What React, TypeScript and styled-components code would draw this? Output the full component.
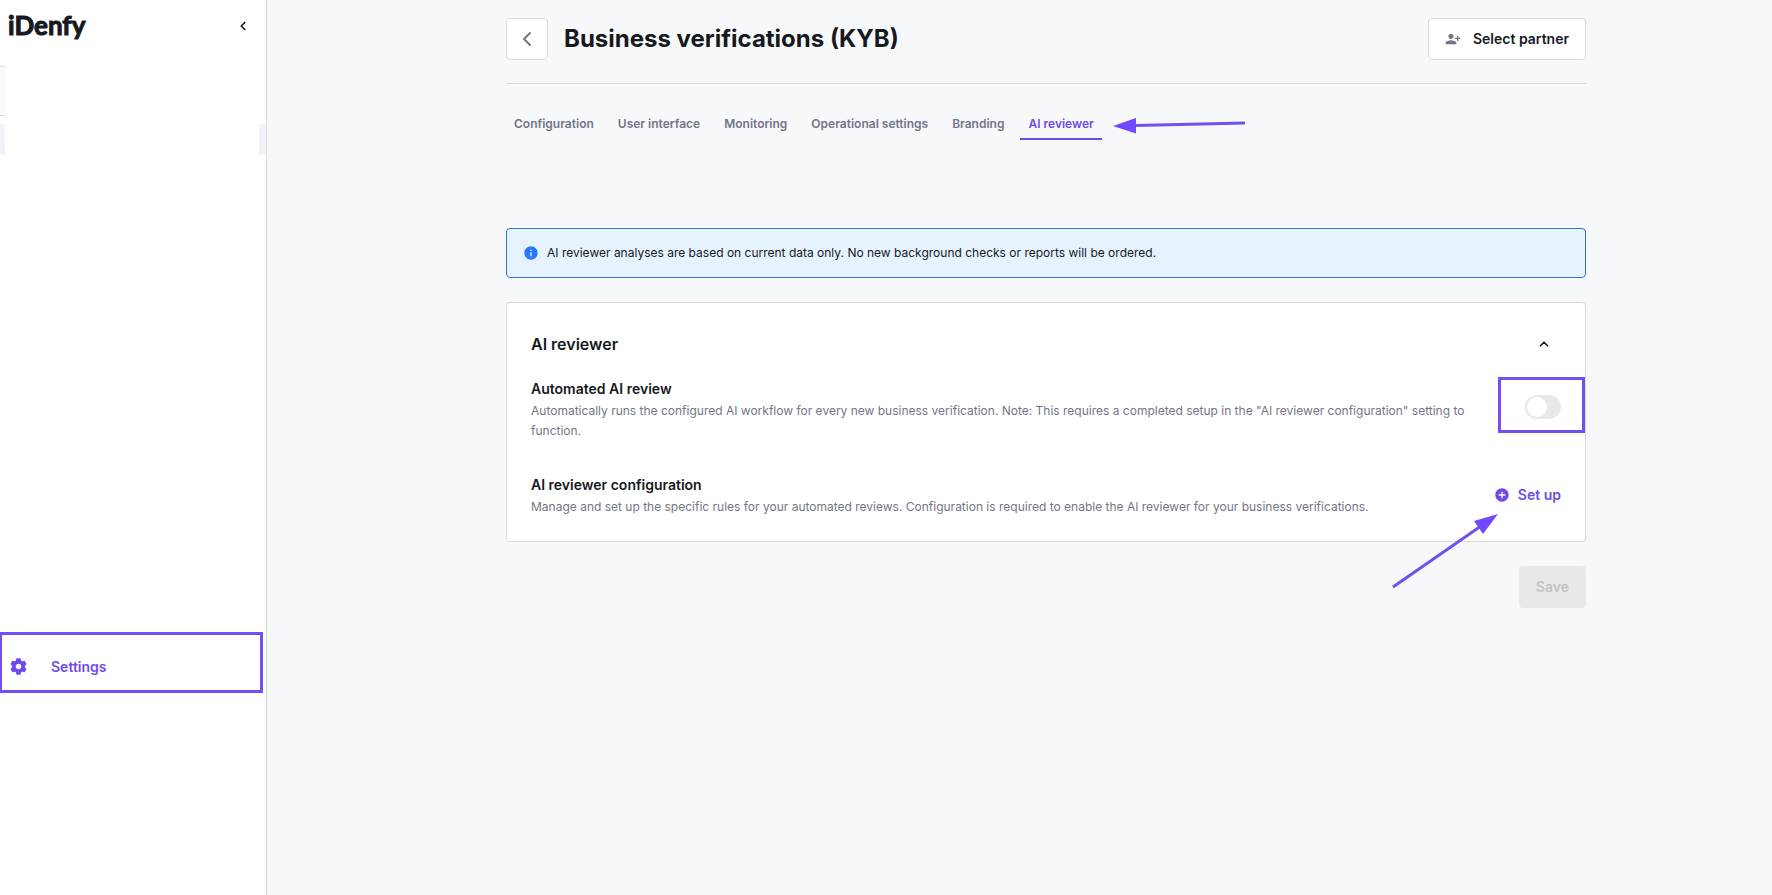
import React, { useState } from "react";
import styled, { createGlobalStyle } from "styled-components";
import { ChevronLeft, ChevronUp } from "lucide-react";
import { MdAddCircle, MdInfo, MdPersonAddAlt1 } from "react-icons/md";

const color = {
  ink: "#16191d",
  muted: "#737687",
  line: "#d8dae3",
  page: "#f7f8fa",
  purple: "#6f4aea",
  marker: "#7250f0",
};

const GlobalStyle = createGlobalStyle`
  * { box-sizing: border-box; }
  body {
    margin: 0;
    background: ${color.page};
    color: ${color.ink};
    font-family: Inter, "Liberation Sans", sans-serif;
    font-size: 12px;
    line-height: 20px;
  }
  button { font: inherit; color: inherit; cursor: pointer; }
  h1, h2, h3, p { margin: 0; }
`;

const Shell = styled.div`
  display: flex;
  min-height: 100vh;
`;

const Sidebar = styled.aside`
  flex: 0 0 267px;
  background: #fff;
  border-right: 1px solid ${color.line};
`;

const SidebarHead = styled.div`
  display: flex;
  justify-content: space-between;
  height: 66px;
  padding: 8px 16px 0 8px;
`;

const Logo = styled.a`
  color: ${color.ink};
  font: 700 26px/34px Lato, sans-serif;
  text-decoration: none;
  -webkit-text-stroke: 1px ${color.ink};
  stroke-linejoin: round;
`;

const IconButton = styled.button`
  display: grid;
  place-items: center;
  width: 14px;
  height: 36px;
  padding: 0;
  border: 0;
  background: none;
`;

const SearchEdge = styled.div`
  width: 5px;
  height: 50px;
  margin-bottom: 8px;
  background: #fafafc;
  border: solid ${color.line};
  border-width: 1px 0;
`;

const NavEdges = styled.div`
  display: flex;
  justify-content: space-between;
  height: 31px;
`;

const NavEdge = styled.span<{ $width: number }>`
  width: ${(p) => p.$width}px;
  background: #f3f2f9;
`;

const Nav = styled.nav`
  margin-top: 477px;
  padding-right: 3px;
`;

const NavLink = styled.a`
  display: flex;
  align-items: center;
  gap: 24px;
  height: 61px;
  padding: 8px 8px 0;
  border: 3px solid ${color.marker};
  border-left-width: 2px;
  color: ${color.purple};
  font-size: 14px;
  font-weight: 600;
  text-decoration: none;
`;

const Main = styled.main`
  flex: 1;
  min-width: 0;
  padding: 18px 0 24px 53px;
`;

const Content = styled.div`
  max-width: 1080px;
  margin: 0 auto;
`;

const Header = styled.header`
  display: flex;
  align-items: center;
  gap: 16px;
  padding-bottom: 23px;
  border-bottom: 1px solid ${color.line};
`;

const BackButton = styled.button`
  display: grid;
  place-items: center;
  width: 42px;
  height: 42px;
  padding: 0;
  background: #fff;
  border: 1px solid ${color.line};
  border-radius: 4px;
  color: ${color.muted};
`;

const PageTitle = styled.h1`
  flex: 1;
  font-size: 24px;
  line-height: 32px;
  font-weight: 700;
`;

const PartnerButton = styled.button`
  display: flex;
  align-items: center;
  gap: 12px;
  height: 42px;
  padding: 0 16px;
  background: #fff;
  border: 1px solid ${color.line};
  border-radius: 4px;
  font-size: 14px;
  font-weight: 600;
  svg { color: ${color.muted}; }
`;

const Tabs = styled.nav`
  display: flex;
  gap: 8px;
  margin: 24px 0 88px;
`;

const Tab = styled.a<{ $active?: boolean }>`
  position: relative;
  padding: 6px 8px 4px;
  border-bottom: 2px solid ${(p) => (p.$active ? color.purple : "transparent")};
  color: ${(p) => (p.$active ? color.purple : color.muted)};
  font-weight: 600;
  text-decoration: none;
`;

const TabArrow = styled.svg`
  position: absolute;
  left: 100%;
  top: 8px;
  margin-left: 11px;
  pointer-events: none;
`;

const Notice = styled.div`
  display: flex;
  align-items: center;
  gap: 8px;
  height: 50px;
  padding: 0 16px;
  margin-bottom: 24px;
  background: #e7f2ff;
  border: 1px solid #2f78d0;
  border-radius: 4px;
  svg { color: #2979ff; }
`;

const Card = styled.section`
  padding: 24px;
  background: #fff;
  border: 1px solid ${color.line};
  border-radius: 4px;
`;

const CardHead = styled.div`
  display: flex;
  align-items: center;
  justify-content: space-between;
  height: 34px;
  padding-right: 10px;
  margin-bottom: 18px;
`;

const CardTitle = styled.h2`
  font-size: 16px;
  font-weight: 600;
`;

const Setting = styled.div`
  display: flex;
  align-items: center;
  justify-content: space-between;
  gap: 48px;
  & + & { margin-top: 34px; }
`;

const SettingTitle = styled.h3`
  margin-bottom: 2px;
  font-size: 14px;
  font-weight: 600;
`;

const SettingText = styled.p`
  color: ${color.muted};
`;

const SwitchFrame = styled.label`
  position: relative;
  display: flex;
  padding-bottom: 6px;
  &::after {
    content: "";
    position: absolute;
    inset: -18px -24px -8px -27px;
    border: 3px solid ${color.marker};
    pointer-events: none;
  }
`;

const Switch = styled.input`
  appearance: none;
  width: 36px;
  height: 24px;
  margin: 0;
  padding: 2px;
  border-radius: 12px;
  background: #e8e8e8;
  cursor: pointer;
  &::before {
    content: "";
    display: block;
    width: 20px;
    height: 20px;
    border-radius: 50%;
    background: #fff;
  }
  &:checked { background: ${color.purple}; }
  &:checked::before { margin-left: 12px; }
`;

const SetupButton = styled.button`
  position: relative;
  display: flex;
  align-items: center;
  gap: 8px;
  padding: 0 0 2px;
  border: 0;
  background: none;
  color: ${color.purple};
  font-size: 14px;
  font-weight: 600;
  white-space: nowrap;
`;

const SetupArrow = styled.svg`
  position: absolute;
  right: 62px;
  top: 28px;
  pointer-events: none;
`;

const Actions = styled.div`
  display: flex;
  justify-content: flex-end;
  margin-top: 24px;
`;

const SaveButton = styled.button`
  height: 42px;
  padding: 0 17px;
  border: 0;
  border-radius: 4px;
  background: #e9e9e9;
  color: #c1c1c4;
  font-size: 14px;
  font-weight: 600;
`;

function GearIcon() {
  return (
    <svg width="17" height="17" viewBox="-8.500 -8.500 17 17" fill="currentColor" aria-hidden="true">
      <circle r="4.600" fill="none" stroke="currentColor" strokeWidth="3.600" />
      {[0, 60, 120, 180, 240, 300].map((angle) => (
        <rect key={angle} x="-2.400" y="-8.200" width="4.800" height="4" rx="1.200" transform={`rotate(${angle})`} />
      ))}
    </svg>
  );
}

const tabs = ["Configuration", "User interface", "Monitoring", "Operational settings", "Branding", "AI reviewer"];

export default function App() {
  const [automated, setAutomated] = useState(false);
  const [open, setOpen] = useState(true);

  return (
    <>
      <GlobalStyle />
      <Shell>
        <Sidebar>
          <SidebarHead>
            <Logo href="#">iDenfy</Logo>
            <IconButton aria-label="Collapse sidebar">
              <ChevronLeft size={14} strokeWidth={3} />
            </IconButton>
          </SidebarHead>
          <SearchEdge />
          <NavEdges>
            <NavEdge $width={5} />
            <NavEdge $width={7} />
          </NavEdges>
          <Nav>
            <NavLink href="#settings">
              <GearIcon />
              Settings
            </NavLink>
          </Nav>
        </Sidebar>
        <Main>
          <Content>
            <Header>
              <BackButton aria-label="Back">
                <ChevronLeft size={24} strokeWidth={2} />
              </BackButton>
              <PageTitle>Business verifications (KYB)</PageTitle>
              <PartnerButton>
                <MdPersonAddAlt1 size={16} />
                Select partner
              </PartnerButton>
            </Header>
            <Tabs>
              {tabs.map((name) => {
                const active = name === "AI reviewer";
                return (
                  <Tab key={name} href="#" $active={active} aria-current={active ? "page" : undefined}>
                    {name}
                    {active && (
                      <TabArrow width="134" height="20" viewBox="0 0 134 20" aria-hidden="true">
                        <path d="M22 9.500 132 7" stroke={color.marker} strokeWidth="3" />
                        <path d="M0 10 23 2V17.500Z" fill="#7048ff" />
                      </TabArrow>
                    )}
                  </Tab>
                );
              })}
            </Tabs>
            <Notice role="note">
              <MdInfo size={16} />
              <p>AI reviewer analyses are based on current data only. No new background checks or reports will be ordered.</p>
            </Notice>
            <Card>
              <CardHead>
                <CardTitle>AI reviewer</CardTitle>
                <IconButton aria-label="Toggle section" aria-expanded={open} onClick={() => setOpen(!open)}>
                  <ChevronUp size={14} strokeWidth={3} />
                </IconButton>
              </CardHead>
              {open && (
                <>
                  <Setting>
                    <div>
                      <SettingTitle id="automated-title">Automated AI review</SettingTitle>
                      <SettingText>
                        Automatically runs the configured AI workflow for every new business verification. Note: This
                        requires a completed setup in the "AI reviewer configuration" setting to function.
                      </SettingText>
                    </div>
                    <SwitchFrame>
                      <Switch
                        type="checkbox"
                        role="switch"
                        aria-labelledby="automated-title"
                        checked={automated}
                        onChange={(e) => setAutomated(e.target.checked)}
                      />
                    </SwitchFrame>
                  </Setting>
                  <Setting>
                    <div>
                      <SettingTitle>AI reviewer configuration</SettingTitle>
                      <SettingText>
                        Manage and set up the specific rules for your automated reviews. Configuration is required to
                        enable the AI reviewer for your business verifications.
                      </SettingText>
                    </div>
                    <SetupButton>
                      <MdAddCircle size={16} />
                      Set up
                      <SetupArrow width="108" height="76" viewBox="0 0 108 76" aria-hidden="true">
                        <path d="M2 74 90 13" stroke={color.marker} strokeWidth="3" />
                        <path d="M107 1 83 8 92 21Z" fill="#7048ff" />
                      </SetupArrow>
                    </SetupButton>
                  </Setting>
                </>
              )}
            </Card>
            <Actions>
              <SaveButton disabled>Save</SaveButton>
            </Actions>
          </Content>
        </Main>
      </Shell>
    </>
  );
}
